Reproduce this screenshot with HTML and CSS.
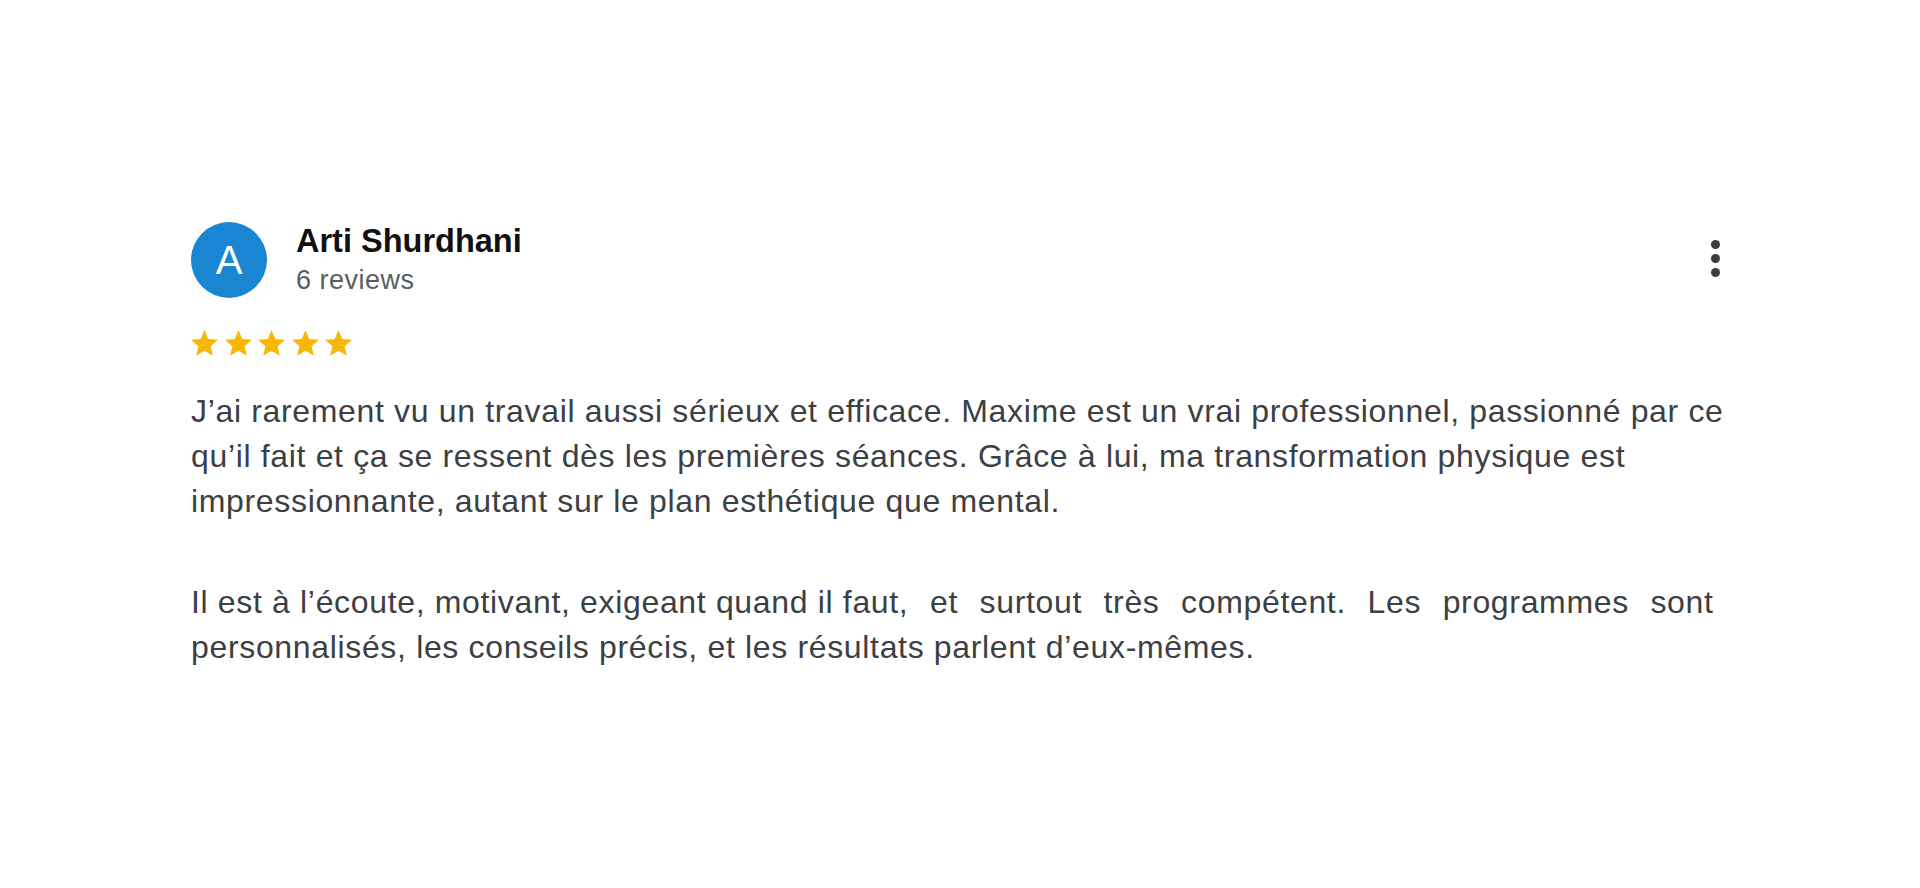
FILE: index.html
```html
<!DOCTYPE html>
<html lang="fr">
<head>
<meta charset="utf-8">
<title>Avis</title>
<link rel="stylesheet" href="styles.css">
</head>
<body>
<article class="review">
  <header class="review-head">
    <div class="avatar">A</div>
    <div class="author">
      <div class="author-name">Arti Shurdhani</div>
      <div class="author-meta">6 reviews</div>
    </div>
    <div class="menu" aria-label="Plus d'options">
      <span class="dot"></span><span class="dot"></span><span class="dot"></span>
    </div>
  </header>
  <div class="stars">
    <svg viewBox="2 2 20 19"><path d="M12 17.27L18.18 21l-1.64-7.03L22 9.24l-7.19-.61L12 2 9.19 8.63 2 9.24l5.46 4.73L5.82 21z"/></svg>
    <svg viewBox="2 2 20 19"><path d="M12 17.27L18.18 21l-1.64-7.03L22 9.24l-7.19-.61L12 2 9.19 8.63 2 9.24l5.46 4.73L5.82 21z"/></svg>
    <svg viewBox="2 2 20 19"><path d="M12 17.27L18.18 21l-1.64-7.03L22 9.24l-7.19-.61L12 2 9.19 8.63 2 9.24l5.46 4.73L5.82 21z"/></svg>
    <svg viewBox="2 2 20 19"><path d="M12 17.27L18.18 21l-1.64-7.03L22 9.24l-7.19-.61L12 2 9.19 8.63 2 9.24l5.46 4.73L5.82 21z"/></svg>
    <svg viewBox="2 2 20 19"><path d="M12 17.27L18.18 21l-1.64-7.03L22 9.24l-7.19-.61L12 2 9.19 8.63 2 9.24l5.46 4.73L5.82 21z"/></svg>
  </div>
  <div class="review-text">
    <p>J’ai rarement vu un travail aussi sérieux et efficace. Maxime est un vrai professionnel, passionné par ce qu’il fait et ça se ressent dès les premières séances. Grâce à lui, ma transformation physique est impressionnante, autant sur le plan esthétique que mental.</p>
    <p>Il est à l’écoute, motivant, exigeant quand il faut,<span class="loose"> et surtout très compétent. Les programmes sont</span> personnalisés, les conseils précis, et les résultats parlent d’eux-mêmes.</p>
  </div>
</article>
</body>
</html>
```

FILE: styles.css
```css
html, body {
  margin: 0;
  background: #ffffff;
}

body {
  padding: 222px 0 0 191px;
  font-family: "Liberation Sans", Arial, Helvetica, sans-serif;
  color: #3c4043;
}

.review {
  width: 1560px;
}

.review-head {
  display: flex;
  align-items: flex-start;
}

.avatar {
  width: 76px;
  height: 76px;
  border-radius: 50%;
  background: #1a85d2;
  color: #ffffff;
  font-size: 40px;
  line-height: 76px;
  text-align: center;
  flex: none;
}

.author {
  margin-left: 29px;
  flex: 1;
}

.author-name {
  font-size: 32.5px;
  line-height: 38px;
  font-weight: 700;
  color: #111111;
}

.author-meta {
  margin-top: 4px;
  font-size: 27px;
  line-height: 32px;
  letter-spacing: 0.5px;
  color: #5a5d61;
}

.menu {
  width: 24px;
  margin: 18px 24px 0 0;
  display: flex;
  flex-direction: column;
  align-items: center;
  gap: 5px;
}

.dot {
  width: 9px;
  height: 9px;
  border-radius: 50%;
  background: #3c3c3c;
}

.stars {
  display: flex;
  gap: 6.5px;
  margin-top: 32px;
}

.stars svg {
  width: 27px;
  height: 25.7px;
  fill: #f8b706;
}

.review-text {
  margin-top: 33px;
  font-size: 32px;
  line-height: 45px;
  letter-spacing: 0.66px;
}

.review-text p {
  margin: 0;
}

.review-text p + p {
  margin-top: 56px;
}

.loose {
  word-spacing: 12px;
}
```
